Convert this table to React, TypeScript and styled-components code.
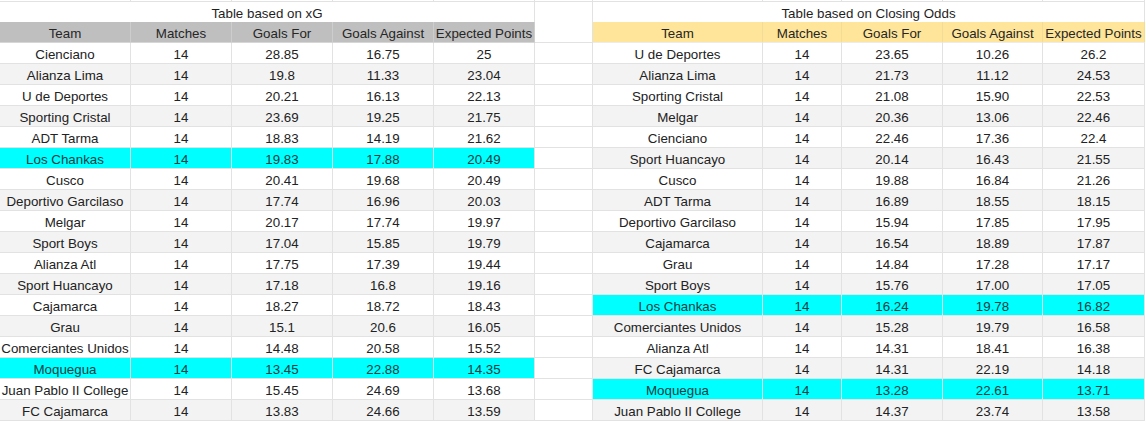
import React from 'react'
import styled, { createGlobalStyle, css } from 'styled-components'

const GlobalStyle = createGlobalStyle`
  html, body {
    margin: 0;
    padding: 0;
    background: #ffffff;
    overflow: hidden;
  }
  * {
    box-sizing: border-box;
  }
`

const COLS = [131, 101, 101, 101, 101, 58, 170, 79, 101, 100, 102]

const Sheet = styled.div`
  display: grid;
  grid-template-columns: ${COLS.map((w) => `${w}px`).join(' ')};
  grid-template-rows: 2px 20px;
  grid-auto-rows: 21px;
  font-family: 'Liberation Sans', Arial, sans-serif;
  font-size: 13.33px;
  color: #222222;
  background: #ffffff;
`

const TopStrip = styled.div`
  height: 2px;
  border-right: 1px solid #e2e2e2;
  border-bottom: 1px solid #e2e2e2;
`

const Title = styled.div<{ $span: number }>`
  grid-column: span ${(p) => p.$span};
  border-right: 1px solid #e2e2e2;
  text-align: center;
  padding-top: 3px;
  line-height: 17px;
  color: #1f1f1f;
`

const Spacer = styled.div<{ $tall?: boolean }>`
  border-right: 1px solid #e2e2e2;
  border-bottom: ${(p) => (p.$tall ? 'none' : '1px solid #e2e2e2')};
  background: #ffffff;
`

type Tone = 'white' | 'stripe' | 'hit' | 'gray' | 'gold'

const tones: Record<Tone, string> = {
  white: '#ffffff',
  stripe: '#f3f3f3',
  hit: '#00ffff',
  gray: '#bfbfbf',
  gold: '#ffe599',
}

const Cell = styled.div<{ $tone: Tone }>`
  background: ${(p) => tones[p.$tone]};
  border-right: 1px solid #e2e2e2;
  border-bottom: 1px solid #e2e2e2;
  text-align: center;
  white-space: nowrap;
  overflow: hidden;
  padding-top: 3px;
  line-height: 17px;
  ${(p) =>
    p.$tone === 'hit' &&
    css`
      color: #14403f;
    `}
  ${(p) =>
    p.$tone === 'gray' &&
    css`
      color: #262626;
      border-right-color: #cdcdcd;
      border-bottom-color: #d6d6d6;
    `}
  ${(p) =>
    p.$tone === 'gold' &&
    css`
      color: #262626;
      border-right-color: #f3dc95;
      border-bottom-color: #ececec;
    `}
`

type Row = [string, string, string, string, string]

const HEAD: Row = ['Team', 'Matches', 'Goals For', 'Goals Against', 'Expected Points']

const xgRows: Row[] = [
  ['Cienciano', '14', '28.85', '16.75', '25'],
  ['Alianza Lima', '14', '19.8', '11.33', '23.04'],
  ['U de Deportes', '14', '20.21', '16.13', '22.13'],
  ['Sporting Cristal', '14', '23.69', '19.25', '21.75'],
  ['ADT Tarma', '14', '18.83', '14.19', '21.62'],
  ['Los Chankas', '14', '19.83', '17.88', '20.49'],
  ['Cusco', '14', '20.41', '19.68', '20.49'],
  ['Deportivo Garcilaso', '14', '17.74', '16.96', '20.03'],
  ['Melgar', '14', '20.17', '17.74', '19.97'],
  ['Sport Boys', '14', '17.04', '15.85', '19.79'],
  ['Alianza Atl', '14', '17.75', '17.39', '19.44'],
  ['Sport Huancayo', '14', '17.18', '16.8', '19.16'],
  ['Cajamarca', '14', '18.27', '18.72', '18.43'],
  ['Grau', '14', '15.1', '20.6', '16.05'],
  ['Comerciantes Unidos', '14', '14.48', '20.58', '15.52'],
  ['Moquegua', '14', '13.45', '22.88', '14.35'],
  ['Juan Pablo II College', '14', '15.45', '24.69', '13.68'],
  ['FC Cajamarca', '14', '13.83', '24.66', '13.59'],
]

const oddsRows: Row[] = [
  ['U de Deportes', '14', '23.65', '10.26', '26.2'],
  ['Alianza Lima', '14', '21.73', '11.12', '24.53'],
  ['Sporting Cristal', '14', '21.08', '15.90', '22.53'],
  ['Melgar', '14', '20.36', '13.06', '22.46'],
  ['Cienciano', '14', '22.46', '17.36', '22.4'],
  ['Sport Huancayo', '14', '20.14', '16.43', '21.55'],
  ['Cusco', '14', '19.88', '16.84', '21.26'],
  ['ADT Tarma', '14', '16.89', '18.55', '18.15'],
  ['Deportivo Garcilaso', '14', '15.94', '17.85', '17.95'],
  ['Cajamarca', '14', '16.54', '18.89', '17.87'],
  ['Grau', '14', '14.84', '17.28', '17.17'],
  ['Sport Boys', '14', '15.76', '17.00', '17.05'],
  ['Los Chankas', '14', '16.24', '19.78', '16.82'],
  ['Comerciantes Unidos', '14', '15.28', '19.79', '16.58'],
  ['Alianza Atl', '14', '14.31', '18.41', '16.38'],
  ['FC Cajamarca', '14', '14.31', '22.19', '14.18'],
  ['Moquegua', '14', '13.28', '22.61', '13.71'],
  ['Juan Pablo II College', '14', '14.37', '23.74', '13.58'],
]

const highlighted = ['Los Chankas', 'Moquegua']

const toneFor = (row: Row, i: number): Tone => {
  if (highlighted.includes(row[0])) return 'hit'
  return i % 2 === 0 ? 'white' : 'stripe'
}

const RowCells = ({ row, tone }: { row: Row; tone: Tone }) => (
  <>
    {row.map((v, j) => (
      <Cell key={j} $tone={tone}>
        {v}
      </Cell>
    ))}
  </>
)

const App = () => {
  return (
    <>
      <GlobalStyle />
      <Sheet>
        {COLS.map((_, i) => (
          <TopStrip key={i} />
        ))}
        <Title $span={5}>Table based on xG</Title>
        <Spacer $tall />
        <Title $span={5}>Table based on Closing Odds</Title>

        <RowCells row={HEAD} tone="gray" />
        <Spacer />
        <RowCells row={HEAD} tone="gold" />

        {xgRows.map((row, i) => (
          <React.Fragment key={row[0]}>
            <RowCells row={row} tone={toneFor(row, i)} />
            <Spacer />
            <RowCells row={oddsRows[i]} tone={toneFor(oddsRows[i], i)} />
          </React.Fragment>
        ))}
      </Sheet>
    </>
  )
}

export default App
